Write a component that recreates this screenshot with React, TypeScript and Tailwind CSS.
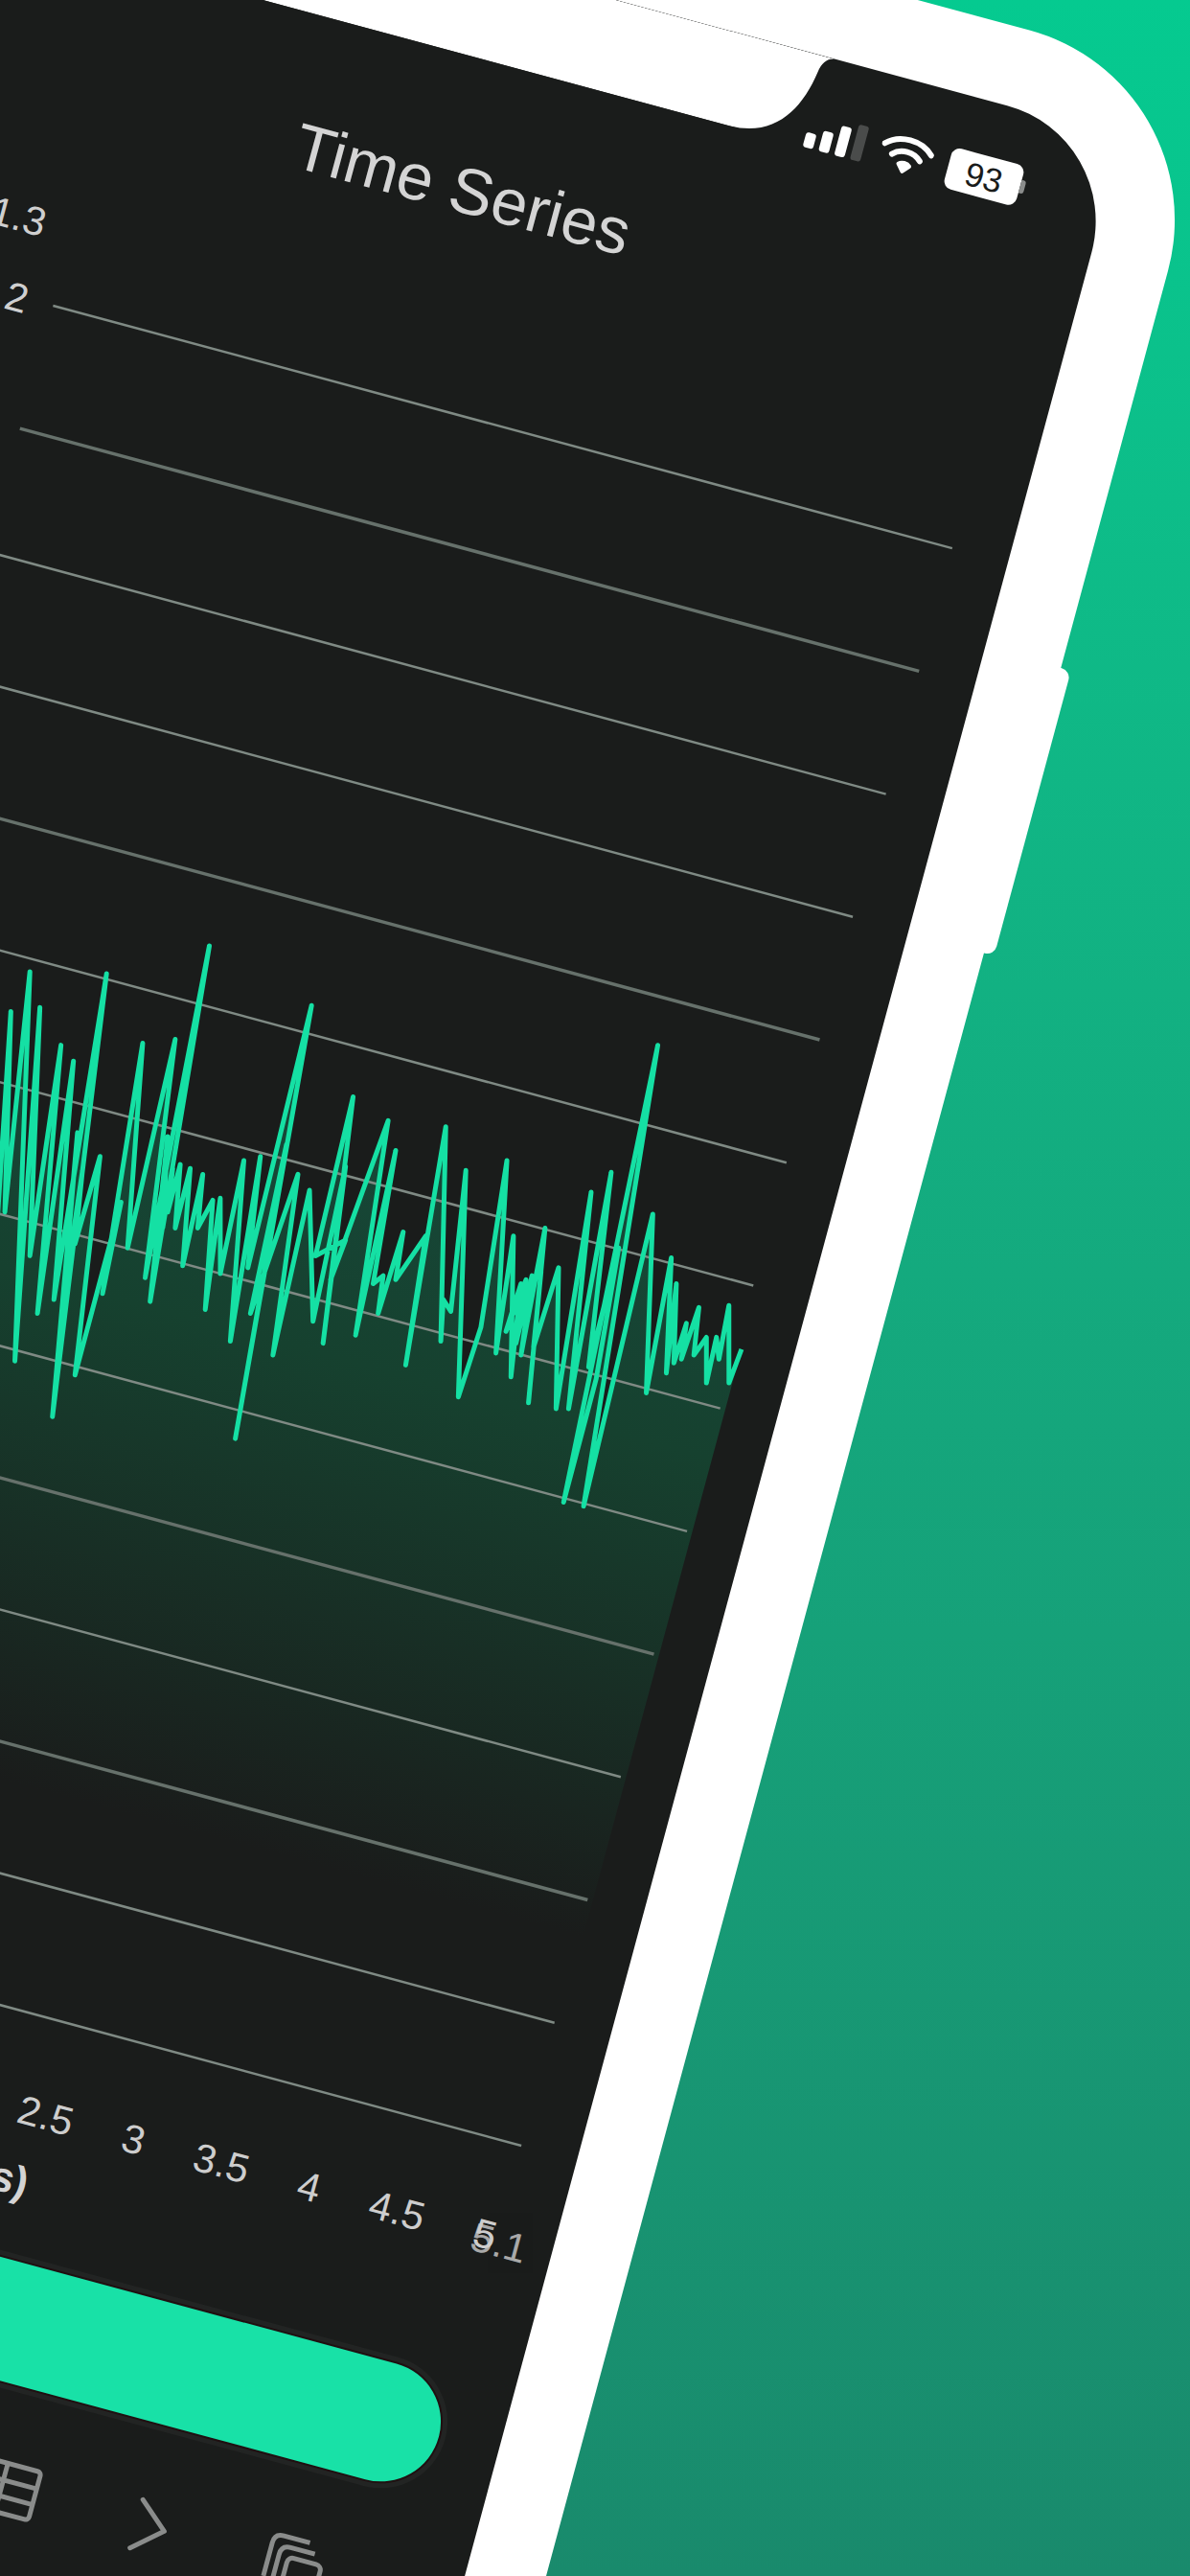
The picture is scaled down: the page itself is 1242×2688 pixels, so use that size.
const COS = 0.9655;
const SIN = 0.2605;

// traced from the reference crop: [x, y] in crop pixels, converted to screen coords below
const TRACE: number[][] = [
  [-60, 620], [-20, 300], [-10, 880], [22, 255], [10, 760], [60, 155], [30, 1135], [80, 245], [60, 870],
  [122, 340], [75, 1015], [147, 380], [108, 980], [213, 160], [105, 1275], [155, 560], [125, 1000], [165, 655],
  [150, 840], [200, 620], [150, 1170], [242, 735], [205, 965], [285, 335], [255, 850], [350, 325], [290, 925],
  [418, 90], [300, 985], [335, 570], [325, 800], [345, 650], [335, 760], [360, 640], [350, 800], [380, 650],
  [365, 895], [405, 665], [395, 800], [425, 730], [410, 1005], [440, 725], [440, 915], [487, 630], [460, 1085],
  [520, 620], [495, 900], [622, 240], [470, 1330], [572, 590], [500, 1015], [595, 665], [545, 1120], [618, 705],
  [625, 1035], [690, 645], [645, 1090], [705, 470], [630, 870], [690, 830], [660, 930], [775, 530], [710, 1070],
  [790, 605], [745, 940], [765, 920], [755, 1015], [805, 810], [790, 930], [850, 820], [810, 1145], [890, 545],
  [880, 1085], [885, 980], [900, 1010], [930, 655], [915, 1225], [960, 1050], [1012, 630], [990, 1115],
  [1025, 820], [1020, 1175], [1040, 940], [1010, 1060], [1050, 930], [1030, 1090], [1062, 920], [1040, 1120],
  [1088, 800], [1055, 1240], [1080, 910], [1065, 1100], [1115, 900], [1110, 1255], [1180, 710], [1135, 1255],
  [1220, 660], [1175, 1150], [1235, 850], [1190, 1180], [1125, 1490], [1313, 340], [1165, 1500], [1303, 765],
  [1290, 1215], [1340, 875], [1330, 1165], [1350, 940], [1345, 1140], [1370, 1040], [1360, 1130], [1395, 1000],
  [1385, 1120], [1410, 1075], [1410, 1190], [1430, 1075], [1435, 1130], [1455, 995], [1455, 1190], [1480, 1105],
];

function toScreen([zx, zy]: number[]) {
  const dx = zx / 1.912 - 1172;
  const dy = 950 + zy / 2.412 - 143;
  return [dx * COS + dy * SIN + 1302, -dx * SIN + dy * COS];
}

const wavePoints = TRACE.map(toScreen);
const wave = wavePoints.map(([x, y]) => `${x.toFixed(1)},${y.toFixed(1)}`).join(" ");
const lastX = wavePoints[wavePoints.length - 1][0];
const firstX = wavePoints[0][0];
const area = `${wave} ${lastX.toFixed(1)},1960 ${firstX.toFixed(1)},1960`;

const gridLines = Array.from({ length: 14 }, (_, i) => 461 + i * 132.8);
const heavyLines = [1, 4, 9, 11];
const ticks = ["0", "0.5", "1", "1.5", "2", "2.5", "3", "3.5", "4", "4.5", "5"];

function StatusBar() {
  return (
    <div className="flex h-[60px] items-center justify-end gap-[17px] pr-[85px]">
      <div className="flex items-end gap-[6px]">
        <span className="h-[16px] w-[11px] rounded-[3px] bg-white" />
        <span className="h-[22px] w-[11px] rounded-[3px] bg-white" />
        <span className="h-[32px] w-[11px] rounded-[3px] bg-white" />
        <span className="h-[38px] w-[11px] rounded-[3px] bg-[#4a4c4b]" />
      </div>
      <svg width="56" height="42" viewBox="0 0 56 42" fill="none" stroke="white" strokeLinecap="round">
        <path d="M3 14 C16 1 40 1 53 14" strokeWidth="6" />
        <path d="M13 23 C21 15 35 15 43 23" strokeWidth="6" />
        <path d="M28 38 L22 31 C25 28 31 28 34 31 Z" fill="white" strokeWidth="4" strokeLinejoin="round" />
      </svg>
      <div className="flex items-center">
        <div className="flex h-[44px] w-[78px] items-center justify-center rounded-[9px] bg-white font-['Liberation_Sans',sans-serif] text-[35px] leading-none font-medium text-[#1a1c1b]">
          93
        </div>
        <span className="h-[14px] w-[5px] rounded-r-[3px] bg-[#8b8d8c]" />
      </div>
    </div>
  );
}

function Chart() {
  return (
    <svg viewBox="0 330 1302 1900" className="h-[1900px] w-[1302px]">
      <defs>
        <linearGradient id="waveFill" gradientUnits="userSpaceOnUse" x1="0" y1="1100" x2="0" y2="1960">
          <stop offset="0" stopColor="#174a3c" />
          <stop offset="0.4" stopColor="#16412f" />
          <stop offset="1" stopColor="#1a1c1b" />
        </linearGradient>
      </defs>
      <polygon points={area} fill="url(#waveFill)" />
      {gridLines.map((y, i) => (
        <line
          key={y}
          x1="270"
          x2="1242"
          y1={y}
          y2={y}
          stroke={heavyLines.includes(i) ? "#66716b" : "#7f8a84"}
          strokeWidth={heavyLines.includes(i) ? 3.5 : 2.5}
        />
      ))}
      <polyline points={wave} fill="none" stroke="#15e0a4" strokeWidth="5" strokeLinejoin="round" />
      <g fill="#cfcfcf" fontFamily="'Liberation Sans', sans-serif" fontSize="42" textAnchor="end">
        <text x="240" y="395">1.3</text>
        <text x="243" y="477">2</text>
      </g>
      <polygon points="1220,209 1253,228 1219,252" fill="#b9c4bd" transform="translate(0 0)" />
    </svg>
  );
}

function XAxis() {
  return (
    <div className="relative mt-[26px] flex h-[60px] items-center pl-[232px] text-[42px] text-[#cdcdcd]">
      {ticks.map((t) => (
        <span key={t} className="w-[95px] text-center">
          {t}
        </span>
      ))}
      <span className="absolute left-[1214px] top-[4px] w-[64px] text-center opacity-80">5.1</span>
    </div>
  );
}

function TableIcon() {
  return (
    <svg width="64" height="60" viewBox="0 0 64 60" fill="none" stroke="#8a8c8b" strokeWidth="5" strokeLinejoin="round">
      <rect x="4" y="4" width="56" height="52" rx="4" />
      <path d="M4 22 H60 M4 39 H60 M24 4 V56" />
    </svg>
  );
}

function ChevronIcon() {
  return (
    <svg width="60" height="60" viewBox="0 0 60 60" fill="none" stroke="#8a8c8b" strokeWidth="5" strokeLinecap="round" strokeLinejoin="round">
      <path d="M14 4 L44 30 L14 56" />
    </svg>
  );
}

function StackIcon() {
  return (
    <svg width="64" height="64" viewBox="0 0 64 64" fill="none" stroke="#8a8c8b" strokeWidth="5" strokeLinejoin="round">
      <path d="M4 50 V14 Q4 4 14 4 H42" />
      <path d="M14 56 V24 Q14 14 24 14 H50" />
      <rect x="24" y="24" width="36" height="36" rx="6" />
    </svg>
  );
}

export default function App() {
  return (
    <div className="relative h-[2688px] w-[1242px] overflow-hidden bg-gradient-to-b from-[#05ca90] to-[#198a6c] font-['Liberation_Sans',sans-serif]">
      {/* the phone lies on the canvas tilted by 15 degrees and runs off the page */}
      <div className="absolute left-[-143px] top-[-297px] h-[2983px] w-[1466px] origin-top-left rotate-[15.1deg] rounded-[205px] bg-white p-[82px]">
        <span className="absolute right-[-11px] top-[634px] h-[308px] w-[30px] rounded-r-[10px] bg-white" />
        <div className="relative h-[2819px] w-[1302px] overflow-hidden rounded-[125px] bg-[#1a1c1b] pt-[48px]">
          <svg width="680" height="96" viewBox="0 0 680 96" className="absolute left-[311px] top-0" fill="white">
            <path d="M0 0 H680 Q668 2 666 18 C660 60 640 96 590 96 H90 C40 96 20 60 14 18 Q12 2 0 0 Z" />
          </svg>
          <StatusBar />
          <h1 className="mt-[84px] h-[80px] text-center text-[68px] leading-[80px] font-normal text-[#d4d4d4]">
            Time Series
          </h1>
          <div className="mt-[58px]">
            <Chart />
          </div>
          <XAxis />
          <div className="mt-[19px] h-[50px] pl-[40px] text-center text-[44px] leading-[50px] font-bold text-[#d4d4d4]">
            Time (s)
          </div>
          <div className="mx-[64px] mt-[56px] h-[125px] rounded-full bg-[#18e1a7] shadow-[0_0_0_2px_#1f1011,0_0_0_7px_#222423]" />
          <div className="mt-[77px] flex h-[60px] items-center justify-end gap-[92px] pr-[143px]">
            <TableIcon />
            <ChevronIcon />
            <StackIcon />
          </div>
        </div>
      </div>
    </div>
  );
}
